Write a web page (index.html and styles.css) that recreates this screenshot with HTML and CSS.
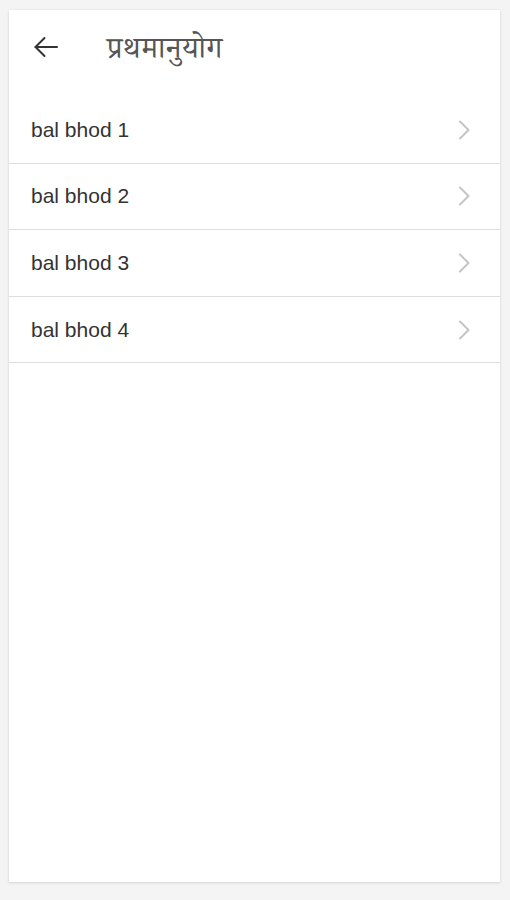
FILE: index.html
```html
<!DOCTYPE html>
<html lang="hi">
<head>
<meta charset="utf-8">
<title>प्रथमानुयोग</title>
<link rel="stylesheet" href="styles.css">
</head>
<body>
<div class="card">
  <header class="toolbar">
    <button class="back" aria-label="back">
      <svg width="26" height="24" viewBox="0 0 26 24" fill="none" stroke="#333" stroke-width="2" stroke-linecap="round" stroke-linejoin="round">
        <path d="M24 12H2.5"/>
        <path d="M11.5 3L2.5 12l9 9"/>
      </svg>
    </button>
    <h1 class="title">प्रथमानुयोग</h1>
  </header>
  <ul class="list">
    <li class="item"><span class="label">bal bhod 1</span><span class="chev"><svg width="12" height="20" viewBox="0 0 12 20" fill="none" stroke="#c4c4c4" stroke-width="2" stroke-linecap="round" stroke-linejoin="round"><path d="M2 1.5l8.5 8.5L2 18.5"/></svg></span></li>
    <li class="item"><span class="label">bal bhod 2</span><span class="chev"><svg width="12" height="20" viewBox="0 0 12 20" fill="none" stroke="#c4c4c4" stroke-width="2" stroke-linecap="round" stroke-linejoin="round"><path d="M2 1.5l8.5 8.5L2 18.5"/></svg></span></li>
    <li class="item"><span class="label">bal bhod 3</span><span class="chev"><svg width="12" height="20" viewBox="0 0 12 20" fill="none" stroke="#c4c4c4" stroke-width="2" stroke-linecap="round" stroke-linejoin="round"><path d="M2 1.5l8.5 8.5L2 18.5"/></svg></span></li>
    <li class="item"><span class="label">bal bhod 4</span><span class="chev"><svg width="12" height="20" viewBox="0 0 12 20" fill="none" stroke="#c4c4c4" stroke-width="2" stroke-linecap="round" stroke-linejoin="round"><path d="M2 1.5l8.5 8.5L2 18.5"/></svg></span></li>
  </ul>
</div>
</body>
</html>
```
FILE: styles.css
```css
* { box-sizing: border-box; }
html, body {
  margin: 0;
  padding: 0;
  background: #f4f4f4;
  height: 100%;
}
body {
  padding: 10px 10px 0 9px;
  font-family: "Liberation Sans", Arial, sans-serif;
}
.card {
  background: #fff;
  height: 872px;
  box-shadow: 0 1px 3px rgba(0,0,0,0.12), 0 0 1px rgba(0,0,0,0.08);
  display: flex;
  flex-direction: column;
}
.toolbar {
  height: 87px;
  display: flex;
  align-items: center;
  padding-left: 24px;
}
.back {
  border: 0;
  background: none;
  padding: 0;
  width: 26px;
  height: 24px;
  display: flex;
  margin-top: -13px;
}
.title {
  margin: 0 0 0 48px;
  font-family: "Noto Serif Devanagari", "Noto Sans Devanagari", "Lohit Devanagari", "FreeSerif", serif;
  font-weight: normal;
  font-size: 30px;
  letter-spacing: 0.6px;
  color: #555;
}
.list {
  list-style: none;
  margin: 0;
  padding: 0;
}
.item {
  height: 66.6px;
  display: flex;
  align-items: center;
  justify-content: space-between;
  padding: 0 30px 0 22px;
  border-bottom: 1px solid #dedede;
}
.label {
  font-size: 21px;
  color: #333;
}
.chev {
  display: flex;
}
```
